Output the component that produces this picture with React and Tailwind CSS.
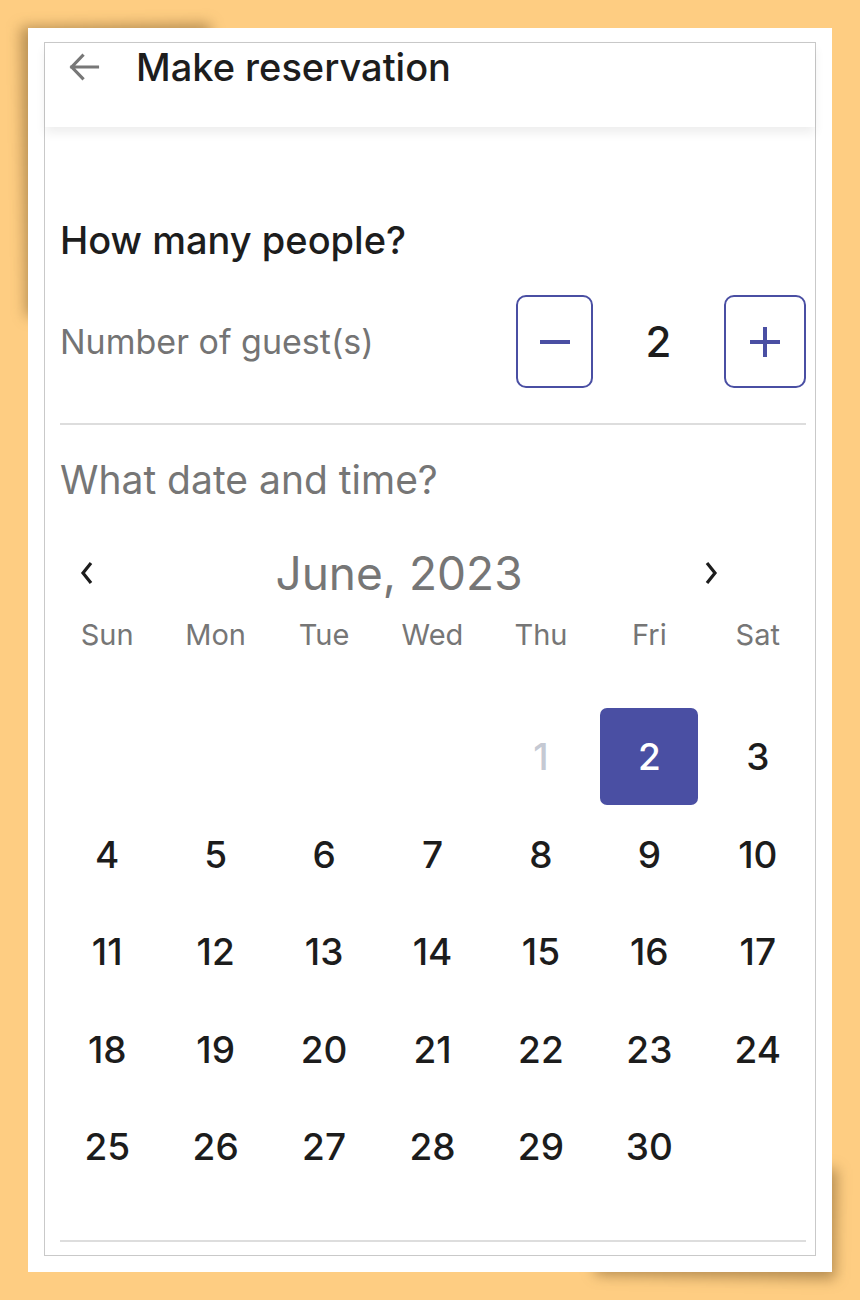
import React from 'react'

const font = { fontFamily: 'Inter, "Open Sans", "Liberation Sans", sans-serif' }

const dayNames = ['Sun', 'Mon', 'Tue', 'Wed', 'Thu', 'Fri', 'Sat']

// june 2023 starts on a thursday, 1 is disabled, 2 is picked
const days = [null, null, null, null, 1, 2, 3]
for (let d = 4; d <= 30; d++) days.push(d)

function DayCell({ day }) {
    if (!day) return <div />
    if (day === 2) {
        return (
            <div className="flex justify-center">
                <div className="w-[98px] h-[97px] rounded-[7px] bg-[#4a4fa3] flex items-center justify-center text-white text-[37px]">
                    {day}
                </div>
            </div>
        )
    }
    return (
        <div className={`flex items-center justify-center text-[37px] ${day === 1 ? 'text-[#c5c9d3]' : 'text-[#1c1c1c]'}`}>
            {day}
        </div>
    )
}

export default function App() {
    return (
        <div className="min-h-[1300px] w-full bg-[#fecd82] p-[28px]" style={font}>
            <div className="relative">
                {/* lifted corner shadows */}
                <div className="absolute left-[-5px] top-[-3px] w-[190px] h-[290px] bg-[rgba(90,60,20,0.42)] blur-[7px] -rotate-1" />
                <div className="absolute right-[-4px] bottom-[-5px] w-[240px] h-[110px] bg-[rgba(90,60,20,0.45)] blur-[7px] rotate-1" />

                <div className="relative bg-white h-[1244px] px-[16px] pt-[14px] pb-[16px]">
                    <div className="border border-[#c9c9c9] h-full flex flex-col">
                        <div className="relative z-10 h-[84px] bg-white flex items-start shadow-[0_6px_10px_rgba(0,0,0,0.07)]">
                            <div className="h-[48px] flex items-center pl-[20px]">
                                <svg width="38" height="36" viewBox="0 0 24 24" fill="none" stroke="#777" strokeWidth="2.1" strokeLinecap="square">
                                    <path d="M21 12H3.8M11 4.5 3.8 12l7.2 7.5" />
                                </svg>
                            </div>
                            <h1 className="ml-[33px] leading-[48px] text-[38px] font-medium text-[#1d1d1d]">Make reservation</h1>
                        </div>

                        <div className="px-[15px] pr-[9px]">
                            <h2 className="mt-[89px] leading-[48px] text-[38px] font-medium text-[#1d1d1d]">How many people?</h2>

                            <div className="mt-[31px] h-[93px] flex items-center">
                                <p className="flex-1 text-[34px] text-[#747474]">Number of guest(s)</p>
                                <button className="w-[77px] h-[93px] border-2 border-[#4a4fa3] rounded-[10px] flex items-center justify-center">
                                    <span className="block w-[30px] h-[4px] bg-[#4a4fa3]" />
                                </button>
                                <span className="w-[131px] text-center text-[42px] font-medium text-[#1d1d1d]">2</span>
                                <button className="w-[82px] h-[93px] border-2 border-[#4a4fa3] rounded-[10px] flex items-center justify-center">
                                    <svg width="32" height="32" viewBox="0 0 32 32">
                                        <path d="M16 1v30M1 16h30" stroke="#4a4fa3" strokeWidth="4" />
                                    </svg>
                                </button>
                            </div>

                            <hr className="mt-[35px] border-0 h-[2px] bg-[#dddddd]" />

                            <h2 className="mt-[31px] leading-[48px] text-[39px] text-[#767676]">What date and time?</h2>
                        </div>

                        <div className="mt-[41px] h-[56px] flex items-center">
                            <button className="w-[84px] flex justify-center pl-[0px]">
                                <svg width="14" height="24" viewBox="0 0 14 24" fill="none" stroke="#1d1d1d" strokeWidth="3.2">
                                    <path d="M11 2 3 12l8 10" />
                                </svg>
                            </button>
                            <div className="flex-1 text-center text-[46px] text-[#767676]">June, 2023</div>
                            <button className="w-[84px] flex justify-center">
                                <svg width="14" height="24" viewBox="0 0 14 24" fill="none" stroke="#1d1d1d" strokeWidth="3.2">
                                    <path d="M3 2l8 10-8 10" />
                                </svg>
                            </button>
                            <div className="w-[62px]" />
                        </div>

                        <div className="ml-[8px] mr-[3px]">
                            <div className="mt-[12px] grid grid-cols-7 h-[40px]">
                                {dayNames.map((n) => (
                                    <div key={n} className="flex items-center justify-center text-[29px] text-[#767676]">{n}</div>
                                ))}
                            </div>
                            <div className="mt-[55px] grid grid-cols-7 auto-rows-[97.6px] font-medium">
                                {days.map((d, i) => (
                                    <DayCell key={i} day={d} />
                                ))}
                            </div>
                        </div>

                        <div className="px-[15px] pr-[9px]">
                            <hr className="mt-[44px] border-0 h-[2px] bg-[#dddddd]" />
                        </div>
                    </div>
                </div>
            </div>
        </div>
    )
}
